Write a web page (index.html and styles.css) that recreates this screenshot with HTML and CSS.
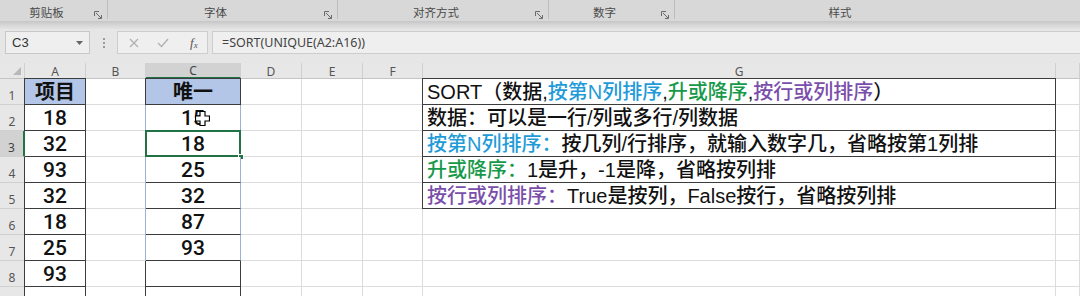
FILE: index.html
```html
<!DOCTYPE html>
<html lang="zh-CN">
<head>
<meta charset="utf-8">
<title>SORT</title>
<link rel="stylesheet" href="styles.css">
</head>
<body>
<div class="app">
  <div class="ribbon">
    <div class="grp g1"><span class="lbl">剪贴板</span><svg class="launch" viewBox="0 0 8 8"><path d="M0.5 5V0.5H5M2 2L7 7M4 7.5H7.5V4"/></svg></div>
    <div class="grp g2"><span class="lbl">字体</span><svg class="launch" viewBox="0 0 8 8"><path d="M0.5 5V0.5H5M2 2L7 7M4 7.5H7.5V4"/></svg></div>
    <div class="grp g3"><span class="lbl">对齐方式</span><svg class="launch" viewBox="0 0 8 8"><path d="M0.5 5V0.5H5M2 2L7 7M4 7.5H7.5V4"/></svg></div>
    <div class="grp g4"><span class="lbl">数字</span><svg class="launch" viewBox="0 0 8 8"><path d="M0.5 5V0.5H5M2 2L7 7M4 7.5H7.5V4"/></svg></div>
    <div class="grp g5"><span class="lbl">样式</span></div>
  </div>
  <div class="shade"></div>
  <div class="fbar">
    <div class="namebox"><span>C3</span><svg class="caret" viewBox="0 0 7 4"><path d="M0 0H7L3.5 4Z"/></svg></div>
    <div class="dots"><i></i><i></i><i></i></div>
    <div class="fnbox">
      <svg class="ico" viewBox="0 0 10 10"><path d="M1 1L9 9M9 1L1 9"/></svg>
      <svg class="ico" viewBox="0 0 12 10"><path d="M1 5L4.5 8.5L11 1"/></svg>
      <span class="fx">f<sub>x</sub></span>
    </div>
    <div class="formula">=SORT(UNIQUE(A2:A16))</div>
  </div>
  <div class="sheet">
    <div class="c h corner"><svg viewBox="0 0 8 8"><path d="M8 0V8H0Z"/></svg></div>
    <div class="c h">A</div><div class="c h">B</div><div class="c h hsel">C</div><div class="c h">D</div><div class="c h">E</div><div class="c h">F</div><div class="c h">G</div><div class="c h"></div>

    <div class="c r">1</div>
    <div class="c k kt blue bold">项目</div><div class="c"></div><div class="c k kt blue bold">唯一</div><div class="c"></div><div class="c"></div><div class="c"></div>
    <div class="c k kt txt">SORT（数据,<span class="cb">按第N列排序</span>,<span class="cg">升或降序</span>,<span class="cp">按行或列排序</span>）</div><div class="c"></div>

    <div class="c r">2</div>
    <div class="c k num">18</div><div class="c"></div><div class="c k spill num">15<svg class="cursor" viewBox="0 0 15 15"><path d="M5 0.5H10V5H14.5V10H10V14.5H5V10H0.5V5H5Z"/></svg></div><div class="c"></div><div class="c"></div><div class="c"></div>
    <div class="c k txt">数据：可以是一行/列或多行/列数据</div><div class="c"></div>

    <div class="c r rsel">3</div>
    <div class="c k noleft num">32</div><div class="c"></div><div class="c k spill num act">18<span class="selbox"></span><span class="handle"></span></div><div class="c"></div><div class="c"></div><div class="c"></div>
    <div class="c k txt"><span class="cb">按第N列排序：</span>按几列/行排序，就输入数字几，省略按第1列排</div><div class="c"></div>

    <div class="c r">4</div>
    <div class="c k num">93</div><div class="c"></div><div class="c k spill num">25</div><div class="c"></div><div class="c"></div><div class="c"></div>
    <div class="c k txt"><span class="cg">升或降序：</span>1是升，-1是降，省略按列排</div><div class="c"></div>

    <div class="c r">5</div>
    <div class="c k num">32</div><div class="c"></div><div class="c k spill num">32</div><div class="c"></div><div class="c"></div><div class="c"></div>
    <div class="c k txt"><span class="cp">按行或列排序：</span>True是按列，False按行，省略按列排</div><div class="c"></div>

    <div class="c r">6</div>
    <div class="c k num">18</div><div class="c"></div><div class="c k spill num">87</div><div class="c"></div><div class="c"></div><div class="c"></div><div class="c"></div><div class="c"></div>

    <div class="c r">7</div>
    <div class="c k num">25</div><div class="c"></div><div class="c k spill num">93</div><div class="c"></div><div class="c"></div><div class="c"></div><div class="c"></div><div class="c"></div>

    <div class="c r">8</div>
    <div class="c k num">93</div><div class="c"></div><div class="c k num"></div><div class="c"></div><div class="c"></div><div class="c"></div><div class="c"></div><div class="c"></div>

    <div class="c r"></div>
    <div class="c k num"></div><div class="c"></div><div class="c k num"></div><div class="c"></div><div class="c"></div><div class="c"></div><div class="c"></div><div class="c"></div>
  </div>
</div>
</body>
</html>
```

FILE: styles.css
```css
* { box-sizing: border-box; }
html, body { margin: 0; padding: 0; }
body {
  width: 1080px;
  height: 296px;
  overflow: hidden;
  background: #e6e6e6;
  font-family: "Noto Sans CJK SC", "Noto Sans", sans-serif;
}
.app { width: 1080px; height: 296px; overflow: hidden; }

/* ribbon */
.ribbon {
  height: 21px;
  display: flex;
  background: #d8d8d8;
  overflow: hidden;
}
.grp {
  flex: none;
  height: 19px;
  display: flex;
  align-items: center;
  justify-content: center;
  position: relative;
  border-right: 1px solid #bdbdbd;
  padding-right: 14px;
}
.g1 { width: 108px; }
.g2 { width: 230px; }
.g3 { width: 211px; }
.g4 { width: 126px; }
.g5 { width: 500px; border-right: none; padding-right: 170px; }
.lbl { font-size: 11.5px; color: #4a4a4a; line-height: 1; padding-top: 6px; }
.launch {
  position: absolute;
  right: 5px;
  top: 11px;
  width: 8px;
  height: 8px;
  fill: none;
  stroke: #6a6a6a;
  stroke-width: 1;
}
.shade {
  height: 8px;
  background: linear-gradient(#c6c6c6, #d9d9d9 60%, #e2e2e2);
}

/* formula bar */
.fbar {
  height: 34px;
  display: flex;
  align-items: flex-start;
  padding-top: 2px;
  background: #e6e6e6;
}
.namebox {
  margin-left: 5px;
  width: 85px;
  height: 23px;
  background: #efefef;
  border: 1px solid #c8c8c8;
  display: flex;
  align-items: center;
  justify-content: space-between;
  padding: 0 6px 0 6px;
  font-size: 13px;
  color: #333;
  font-family: "Liberation Sans", "Noto Sans", sans-serif;
}
.caret { width: 7px; height: 4px; fill: #666; }
.dots {
  width: 27px;
  height: 23px;
  display: flex;
  flex-direction: column;
  align-items: center;
  justify-content: center;
  gap: 2px;
}
.dots i { width: 2px; height: 2px; background: #9a9a9a; display: block; }
.fnbox {
  width: 91px;
  height: 23px;
  background: #efefef;
  border: 1px solid #cdcdcd;
  display: flex;
  align-items: center;
  padding-left: 11px;
  gap: 18px;
}
.ico { width: 10px; height: 10px; fill: none; stroke: #b0b0b0; stroke-width: 1.3; }
.ico + .ico { width: 12px; }
.fx {
  font-family: "Liberation Serif", serif;
  font-style: italic;
  font-size: 13px;
  color: #555;
  margin-left: 3px;
}
.fx sub { font-size: 9px; vertical-align: -1px; }
.formula {
  margin-left: 4px;
  flex: 1;
  height: 23px;
  background: #efefef;
  border: 1px solid #cdcdcd;
  border-right: none;
  display: flex;
  align-items: center;
  padding-left: 9px;
  font-size: 12.5px;
  color: #444;
  font-family: "Noto Sans", "Liberation Sans", sans-serif;
}

/* sheet */
.sheet {
  display: grid;
  grid-template-columns: 25px 61px 60px 95px 61px 61px 60px 633px 1fr;
  grid-template-rows: 16px repeat(9, 26px);
  background: #fff;
}
.c {
  border-right: 1px solid #dcdcdc;
  border-bottom: 1px solid #dcdcdc;
  display: flex;
  align-items: center;
  justify-content: center;
  background: #fff;
  font-size: 20px;
  color: #111;
  line-height: 1;
  white-space: nowrap;
  overflow: visible;
}
.h {
  background: #e7e7e7;
  border-right-color: #cfcfcf;
  border-bottom-color: #c4c4c4;
  font-size: 12px;
  color: #555;
  font-family: "Noto Sans", "Liberation Sans", sans-serif;
  padding-top: 2px;
}
.corner { justify-content: flex-end; align-items: flex-end; padding: 0 3px 3px 0; }
.corner svg { width: 8px; height: 8px; fill: #b8b8b8; }
.hsel {
  background: #d2d2d2;
  border-bottom: 2px solid #217346;
  color: #444;
}
.r {
  background: #e7e7e7;
  border-right-color: #c4c4c4;
  border-bottom-color: #d0d0d0;
  font-size: 12px;
  color: #555;
  font-family: "Noto Sans", "Liberation Sans", sans-serif;
  padding-top: 9px;
}
.rsel {
  background: #d2d2d2;
  border-right: 2px solid #217346;
  color: #444;
}
.k {
  border-right-color: #3c3c3c;
  border-bottom-color: #3c3c3c;
  box-shadow: -1px 0 0 #3c3c3c;
}
.k.kt { box-shadow: -1px 0 0 #3c3c3c, 0 -1px 0 #3c3c3c, -1px -1px 0 #3c3c3c; }
.k.noleft { box-shadow: none; }
.blue { background: #b4c6e7; }
.bold {
  font-family: "Liberation Sans", "Noto Sans CJK SC", sans-serif;
  font-weight: 700;
  font-size: 20px;
  padding-top: 1px;
}
.num {
  font-family: Roboto, "Noto Sans", sans-serif;
  font-weight: 500;
  font-size: 21px;
  padding-top: 1px;
}
.spill {
  border-right-color: #9cb2d4;
  box-shadow: -1px 0 0 #9cb2d4;
  position: relative;
}
.txt {
  justify-content: flex-start;
  padding-left: 4px;
  font-family: "Liberation Sans", "Noto Sans CJK SC", sans-serif;
  font-size: 20px;
  font-weight: 500;
  color: #111;
}
.cb { color: #1f9bd8; }
.cg { color: #17994a; }
.cp { color: #7a4fab; }

.act { position: relative; }
.selbox {
  position: absolute;
  left: -1px;
  top: -1px;
  right: -1px;
  bottom: -1px;
  border: 2px solid #217346;
}
.handle {
  position: absolute;
  right: -4px;
  bottom: -4px;
  width: 6px;
  height: 6px;
  background: #217346;
  border: 1px solid #fff;
}
.cursor {
  position: absolute;
  left: 49px;
  top: 6px;
  width: 15px;
  height: 15px;
  fill: #fff;
  stroke: #000;
  stroke-width: 1.2;
}
```
